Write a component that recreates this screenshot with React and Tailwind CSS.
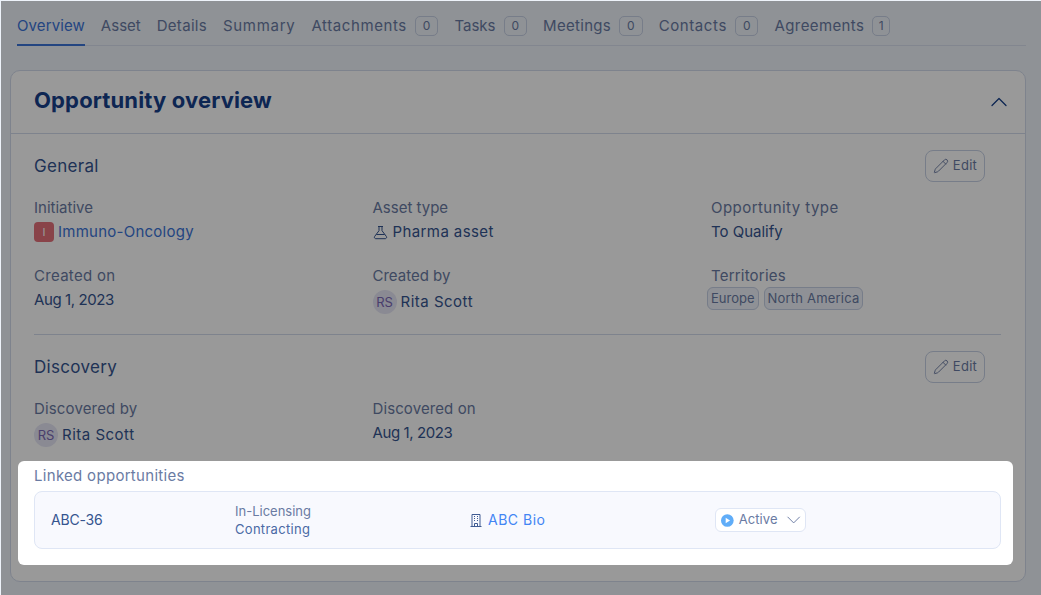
import React from "react";
import { ChevronUp, ChevronDown, Pencil } from "lucide-react";

function Tab({ label, count, active, track }) {
  return (
    <div className={`relative flex h-[45px] items-center pt-[9px] pb-[2px] gap-[8px] ${active ? "text-[#3b74d8]" : "text-[#6a7ba3]"}`}>
      <span className={`text-[15px] leading-[20px] ${track}`}>{label}</span>
      {count !== undefined && (
        <span className={`flex h-[20px] items-center justify-center rounded-[5px] border border-[#c6d0e4] text-[12px] leading-none text-[#6a7ba3] ${count === 1 ? "px-[5.5px]" : "px-[7px]"}`}>{count}</span>
      )}
      {active && <span className="absolute bottom-[-1px] left-0 right-0 h-[2px] bg-[#3b74d8]" />}
    </div>
  );
}

function Field({ label, children, track, valueTrack }) {
  return (
    <div className="flex h-[68px] flex-col pt-[1px]">
      <div className={`text-[15px] leading-[20px] text-[#6a7ba3] ${track}`}>{label}</div>
      <div className={`mt-[4px] flex items-center text-[15px] leading-[20px] text-[#35548f] ${valueTrack}`}>{children}</div>
    </div>
  );
}

function EditButton() {
  return (
    <button className="flex h-[32px] w-[60px] items-center justify-center gap-[4px] rounded-[8px] border border-[#c6d0e4] text-[13px] tracking-[0.3px] text-[#6a7ba3]">
      <Pencil size={16} strokeWidth={1.4} />
      <span>Edit</span>
    </button>
  );
}

function Avatar() {
  return <span className="mr-[4px] flex h-[24px] w-[24px] items-center justify-center rounded-full bg-[#e6e6f6] text-[13px] tracking-normal text-[#7a68b4]">RS</span>;
}

function Tag({ children, track }) {
  return <span className={`flex h-[23px] items-center rounded-[6px] border border-[#c6d0e4] bg-[#eef2fa] px-[3px] text-[13px] text-[#6a7ba3] ${track}`}>{children}</span>;
}

export default function App() {
  return (
    <div className="relative h-[595px] w-[1041px] overflow-hidden bg-[#eef3fa]" style={{ fontFamily: "Inter, 'Liberation Sans', sans-serif" }}>
      <div className="pl-[17px] pr-[15px]">
        <div className="flex gap-[16px] border-b border-[#d9e0ee]">
          <Tab label="Overview" active track="tracking-[0.1px]" />
          <Tab label="Asset" />
          <Tab label="Details" track="tracking-[0.3px]" />
          <Tab label="Summary" track="tracking-[0.7px]" />
          <Tab label="Attachments" count={0} track="tracking-[0.6px]" />
          <Tab label="Tasks" count={0} />
          <Tab label="Meetings" count={0} track="tracking-[0.3px]" />
          <Tab label="Contacts" count={0} track="tracking-[0.6px]" />
          <Tab label="Agreements" count={1} track="tracking-[0.4px]" />
        </div>
      </div>

      <div className="mt-[24px] ml-[10px] mr-[15px] h-[512px] rounded-[10px] border border-[#d3dbec] bg-white">
        <div className="flex h-[63px] items-center justify-between border-b border-[#d3dbec] pb-[3px] pl-[23px] pr-[12px]">
          <h2 className="mt-[-2px] text-[22px] font-bold leading-[28px] tracking-[0.15px] text-[#17408a]">Opportunity overview</h2>
          <ChevronUp size={28} strokeWidth={1.1} className="mt-[3px] text-[#17408a]" />
        </div>

        <div className="pl-[23px] pr-[24px] pt-[16px]">
          <div className="flex h-[32px] items-center justify-between pr-[16px]">
            <h3 className="text-[17px] leading-[24px] tracking-[0.3px] text-[#35548f]">General</h3>
            <EditButton />
          </div>
          <div className="mt-[15px] grid grid-cols-[338.5px_338.5px_1fr]">
            <Field label="Initiative">
              <span className="mr-[4px] flex h-[20px] w-[20px] items-center justify-center rounded-[4px] bg-[#e4717a] text-[11px] text-white">I</span>
              <span className="tracking-[0.25px] text-[#3b74d8]">Immuno-Oncology</span>
            </Field>
            <Field label="Asset type" valueTrack="tracking-[0.4px]">
              <svg width="15" height="15" viewBox="0 0 15 15" fill="none" stroke="currentColor" strokeWidth="1" className="mr-[5px]">
                <path d="M5 1.5h5M6 1.5v4.2L1.6 11.5c-.7 1 .1 2.2 1.2 2.2h9.4c1.1 0 1.9-1.2 1.2-2.2L9 5.7V1.5M3.4 9.5h8.2" />
              </svg>
              Pharma asset
            </Field>
            <Field label="Opportunity type" track="tracking-[0.45px]">To Qualify</Field>
            <Field label="Created on" track="tracking-[0.3px]" valueTrack="tracking-[-0.4px]">Aug 1, 2023</Field>
            <Field label="Created by" valueTrack="tracking-[0.5px]">
              <Avatar />
              Rita Scott
            </Field>
            <div className="flex h-[68px] flex-col pt-[1px]">
              <div className="text-[15px] leading-[20px] tracking-[0.2px] text-[#6a7ba3]">Territories</div>
              <div className="ml-[-4px] mt-[1px] flex gap-[5px]">
                <Tag>Europe</Tag>
                <Tag track="tracking-[0.2px]">North America</Tag>
              </div>
            </div>
          </div>
          <div className="mt-[1px] h-px bg-[#d3dbec]" />
          <div className="mt-[16px] flex h-[32px] items-center justify-between pr-[16px]">
            <h3 className="text-[17px] leading-[24px] tracking-[0.3px] text-[#35548f]">Discovery</h3>
            <EditButton />
          </div>
          <div className="mt-[15px] grid grid-cols-[338.5px_338.5px_1fr]">
            <Field label="Discovered by" track="tracking-[0.15px]" valueTrack="tracking-[0.5px]">
              <Avatar />
              Rita Scott
            </Field>
            <Field label="Discovered on" track="tracking-[0.1px]" valueTrack="tracking-[-0.4px]">Aug 1, 2023</Field>
          </div>
        </div>
      </div>

      <div className="absolute bottom-0 left-px right-0 top-px bg-black/40" />

      <div className="absolute left-[18px] top-[461px] h-[104px] w-[995px] rounded-[6px] bg-white pl-[16px] pr-[12px] pt-[5px]">
        <div className="text-[15px] leading-[20px] tracking-[0.3px] text-[#6a7ba3]">Linked opportunities</div>
        <div className="mt-[5px] grid h-[58px] grid-cols-[184px_235px_245px_1fr] items-center rounded-[8px] border border-[#dfe6f5] bg-[#f8f9fe] pl-[16px]">
          <div className="pb-[2px] text-[14px] tracking-[-0.2px] text-[#35548f]">ABC-36</div>
          <div className="text-[13px] leading-[18px]">
            <div className="text-[#6a7ba3]">In-Licensing</div>
            <div className="tracking-[0.3px] text-[#4a6aa5]">Contracting</div>
          </div>
          <div className="flex items-center gap-[6px] pb-[1px] text-[14px] tracking-[0.5px] text-[#4285f4]">
            <svg width="12" height="14" viewBox="0 0 12 14" fill="none" stroke="#3e5a92" strokeWidth="1">
              <path d="M2 13V1.5h8V13M.5 13.5h11M4.5 13.5v-3h3v3" />
              <path d="M4 3.5h1M7 3.5h1M4 5.5h1M7 5.5h1M4 7.5h1M7 7.5h1" />
            </svg>
            ABC Bio
          </div>
          <div className="flex h-[24px] w-[91px] items-center rounded-[6px] border border-[#dfe6f5] bg-white pl-[5px] text-[13px] tracking-[0.1px] text-[#6a7ba3]">
            <svg width="13" height="13" viewBox="0 0 13 13"><circle cx="6.5" cy="6.5" r="6.5" fill="#60adf8" /><path d="M4.8 3.7 9.3 6.5 4.8 9.3Z" fill="#fff" /></svg>
            <span className="ml-[5px]">Active</span>
            <ChevronDown size={24} strokeWidth={1} className="ml-[4px]" />
          </div>
        </div>
      </div>
    </div>
  );
}
